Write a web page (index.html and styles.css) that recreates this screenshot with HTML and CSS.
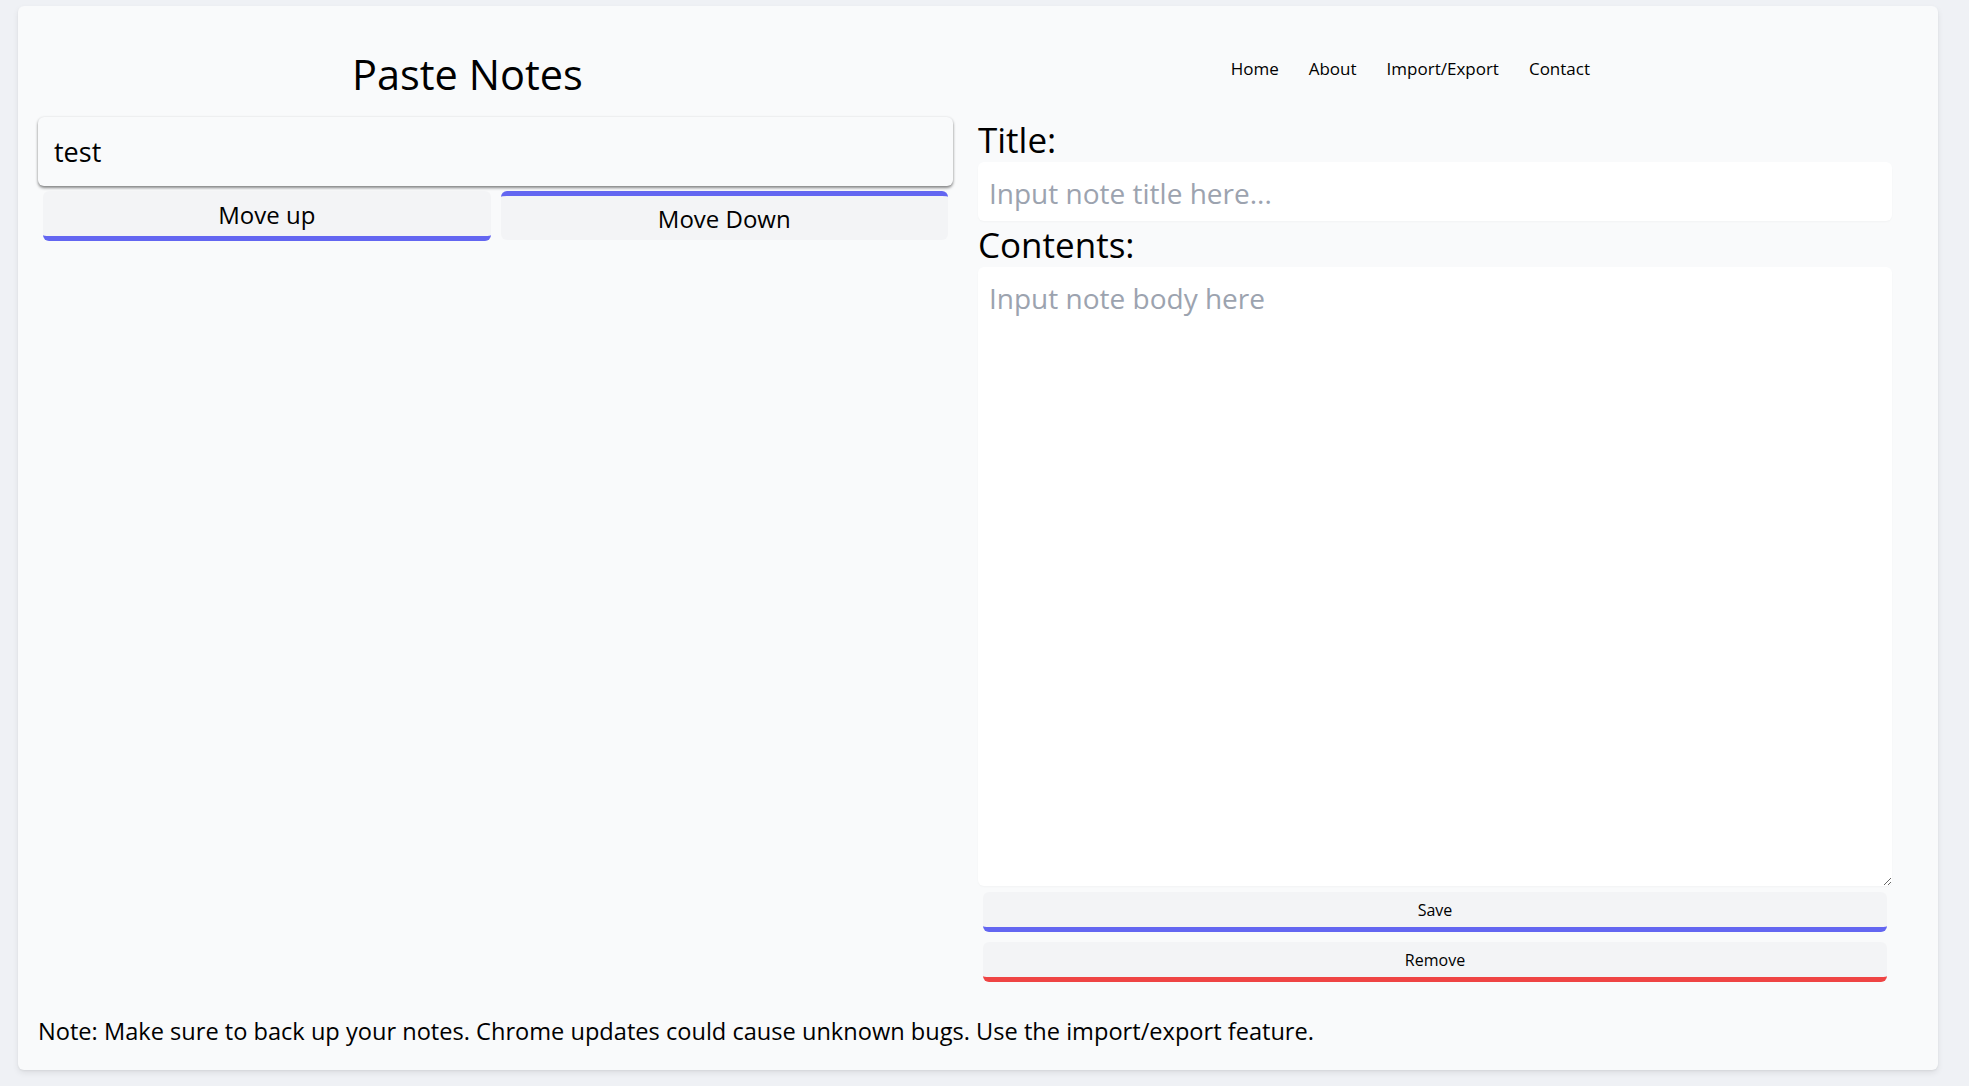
FILE: index.html
```html
<!DOCTYPE html>
<html lang="en">
<head>
<meta charset="utf-8">
<title>Paste Notes</title>
<link rel="stylesheet" href="styles.css">
</head>
<body>
<div class="card">
  <header class="header">
    <h1 class="brand">Paste Notes</h1>
    <nav class="nav">
      <a class="nav-link" href="#">Home</a>
      <a class="nav-link" href="#">About</a>
      <a class="nav-link" href="#">Import/Export</a>
      <a class="nav-link" href="#">Contact</a>
    </nav>
  </header>
  <main class="main">
    <section class="list-col">
      <div class="note-item">test</div>
      <div class="move-row">
        <button class="move-btn move-up">Move up</button>
        <button class="move-btn move-down">Move Down</button>
      </div>
    </section>
    <section class="edit-col">
      <label class="field-label" for="title">Title:</label>
      <input class="title-input" id="title" type="text" placeholder="Input note title here...">
      <label class="field-label label-contents" for="body">Contents:</label>
      <textarea class="body-input" id="body" placeholder="Input note body here"></textarea>
      <button class="action-btn save-btn">Save</button>
      <button class="action-btn remove-btn">Remove</button>
    </section>
  </main>
  <p class="footnote">Note: Make sure to back up your notes. Chrome updates could cause unknown bugs. Use the import/export feature.</p>
</div>
</body>
</html>
```
FILE: styles.css
```css
* { box-sizing: border-box; }

html, body {
  margin: 0;
  padding: 0;
}

body {
  background: #eff1f5;
  font-family: "Open Sans", "Noto Sans", sans-serif;
  color: #000;
  padding: 6px 31px 17px 18px;
}

.card {
  background: #f9fafb;
  border-radius: 6px;
  box-shadow: 0 3px 6px rgba(0, 0, 0, 0.08), 0 1px 2px rgba(0, 0, 0, 0.05);
  padding: 0 46px 23px 20px;
}

.header {
  display: flex;
  justify-content: space-between;
  align-items: flex-start;
  padding: 43px 287px 0 314px;
  height: 94px;
  margin-bottom: 17px;
}

.brand {
  margin: 0;
  font-size: 41.5px;
  line-height: 50px;
  font-weight: 400;
}

.nav {
  display: flex;
  margin-top: 8px;
}

.nav-link {
  color: #000;
  text-decoration: none;
  font-size: 17px;
  line-height: 24px;
  font-weight: 500;
  padding: 0 15px;
}

.main {
  display: grid;
  grid-template-columns: 915px 914px;
  column-gap: 25px;
  align-items: start;
}

.note-item {
  background: #f9fafb;
  border-radius: 6px;
  height: 69px;
  line-height: 69px;
  padding: 0 16px;
  font-size: 27px;
  box-shadow: 0 2px 3px rgba(0, 0, 0, 0.45), 0 0 3px rgba(0, 0, 0, 0.08);
}

.move-row {
  display: flex;
  align-items: flex-start;
  gap: 10px;
  padding: 0 5px;
  margin-top: 5px;
}

.move-btn {
  flex: 1 1 0;
  background: #f3f4f6;
  border: none;
  border-radius: 6px;
  font-family: inherit;
  font-size: 24px;
  color: #000;
  padding: 0;
  cursor: pointer;
}

.move-up {
  height: 50px;
  border-bottom: 5px solid #6366f1;
  padding-top: 2px;
}

.move-down {
  height: 49px;
  border-top: 5px solid #6366f1;
}

.edit-col {
  display: flex;
  flex-direction: column;
}

.field-label {
  font-size: 35px;
  line-height: 44px;
  height: 44px;
  padding-top: 1px;
}

.title-input {
  margin-top: 1px;
  height: 59px;
  border: none;
  border-radius: 6px;
  background: #fff;
  padding: 2px 11px 0;
  font-family: inherit;
  font-size: 28px;
  color: #000;
  box-shadow: 0 1px 2px rgba(0, 0, 0, 0.03);
  outline: none;
}

.label-contents {
  margin-top: 2px;
  padding-top: 0;
}

.body-input {
  margin-top: 0;
  height: 619px;
  border: none;
  border-radius: 6px;
  background: #fff;
  padding: 11px 11px;
  font-family: inherit;
  font-size: 28px;
  line-height: 40px;
  color: #000;
  box-shadow: 0 1px 2px rgba(0, 0, 0, 0.03);
  outline: none;
  resize: vertical;
}

.title-input::placeholder,
.body-input::placeholder {
  color: #9ca3af;
}

.action-btn {
  margin: 0 5px;
  height: 40px;
  background: #f3f4f6;
  border: none;
  border-radius: 6px;
  font-family: inherit;
  font-size: 16px;
  font-weight: 500;
  color: #000;
  padding: 0;
  cursor: pointer;
}

.save-btn {
  margin-top: 6px;
  border-bottom: 5px solid #6366f1;
}

.remove-btn {
  margin-top: 10px;
  border-bottom: 5px solid #ef4444;
}

.footnote {
  margin: 33px 0 0;
  font-size: 23.6px;
  line-height: 32px;
}
```
